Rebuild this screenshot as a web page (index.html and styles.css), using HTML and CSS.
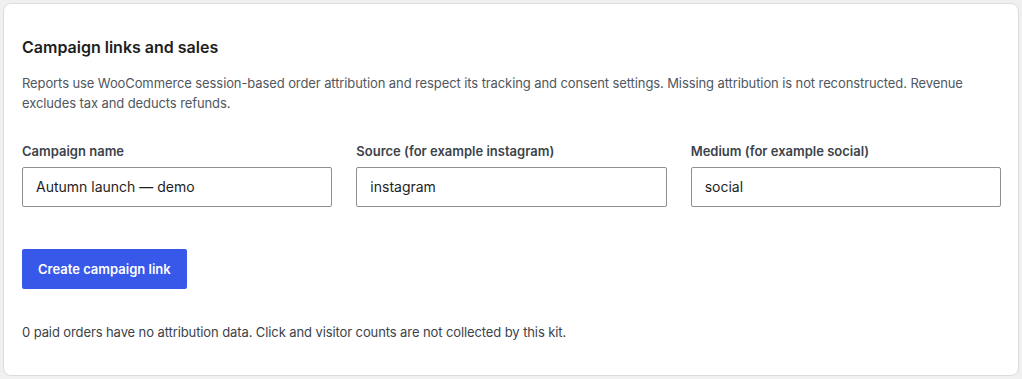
FILE: index.html
```html
<!DOCTYPE html>
<html lang="en">
<head>
<meta charset="utf-8">
<title>Campaign links and sales</title>
<link rel="stylesheet" href="styles.css">
</head>
<body>
<section class="card">
  <h2 class="title">Campaign links and sales</h2>
  <p class="desc">Reports use WooCommerce session-based order attribution and respect its tracking and consent settings. Missing attribution is not reconstructed. Revenue excludes tax and deducts refunds.</p>
  <div class="fields">
    <label class="field">
      <span class="label">Campaign name</span>
      <input class="input" type="text" value="Autumn launch — demo">
    </label>
    <label class="field">
      <span class="label">Source (for example instagram)</span>
      <input class="input" type="text" value="instagram">
    </label>
    <label class="field">
      <span class="label">Medium (for example social)</span>
      <input class="input" type="text" value="social">
    </label>
  </div>
  <div class="actions">
    <button class="button" type="button">Create campaign link</button>
  </div>
  <p class="note">0 paid orders have no attribution data. Click and visitor counts are not collected by this kit.</p>
</section>
</body>
</html>
```
FILE: styles.css
```css
* { box-sizing: border-box; }
html, body { margin: 0; }
body {
  background: #f0f0f1;
  padding: 3px 3px 0 3px;
  font-family: Inter, "Noto Sans", "Liberation Sans", sans-serif;
  color: #1e1e1e;
  height: 379px;
  overflow: hidden;
}
.card {
  background: #fff;
  border: 1px solid #dcdcde;
  border-radius: 8px;
  padding: 31px 17px 31px 18px;
  height: 373px;
}
.title {
  margin: 0;
  font-size: 16px;
  line-height: 24px;
  font-weight: 600;
  color: #1e1e1e;
}
.desc {
  margin: 15px 0 0;
  font-size: 13px;
  line-height: 19.5px;
  color: #50575e;
  letter-spacing: -0.1px;
}
.fields {
  margin-top: 29px;
  display: grid;
  grid-template-columns: repeat(3, 1fr);
  gap: 24px;
}
.field {
  display: flex;
  flex-direction: column;
  gap: 5px;
}
.label {
  font-size: 13px;
  line-height: 19.5px;
  font-weight: 600;
  color: #3c434a;
}
.input {
  height: 40px;
  border: 1px solid #8c8f94;
  border-radius: 2px;
  padding: 0 13px;
  font-family: inherit;
  font-size: 14px;
  color: #1e1e1e;
  background: #fff;
  width: 100%;
  outline: none;
}
.actions {
  margin-top: 42px;
  display: flex;
}
.button {
  height: 40px;
  padding: 0 16px;
  background: #3858e9;
  color: #fff;
  border: 0;
  border-radius: 2px;
  font-family: inherit;
  font-size: 13px;
  font-weight: 600;
  cursor: pointer;
}
.note {
  margin: 34px 0 0;
  font-size: 13px;
  line-height: 19.5px;
  color: #3c434a;
  letter-spacing: -0.1px;
}
```
